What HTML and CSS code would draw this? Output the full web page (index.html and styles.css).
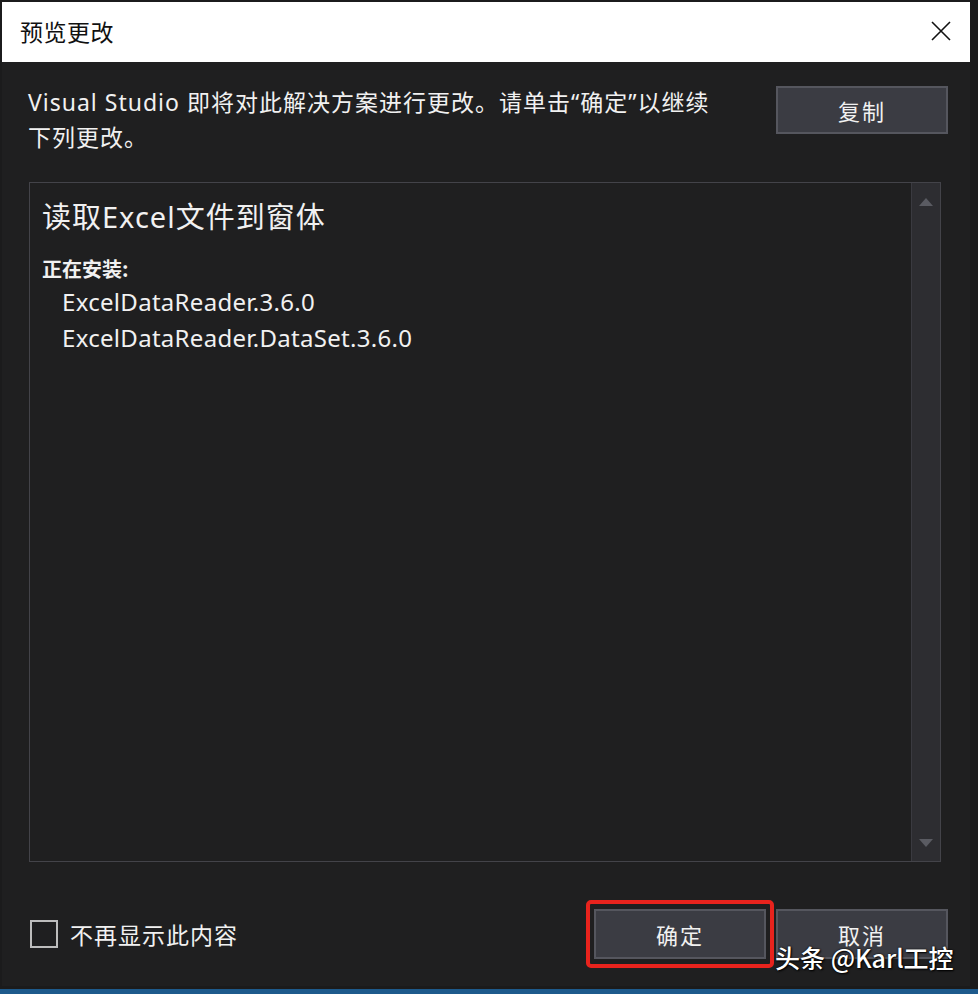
FILE: index.html
```html
<!DOCTYPE html>
<html lang="zh-CN">
<head>
<meta charset="utf-8">
<title>预览更改</title>
<link rel="stylesheet" href="styles.css">
</head>
<body>
<div class="dialog">
  <div class="titlebar">
    <span class="title">预览更改</span>
    <svg class="close" width="22" height="22" viewBox="0 0 22 22"><path d="M2 2 L20 20 M20 2 L2 20" stroke="#111" stroke-width="1.6" fill="none"/></svg>
  </div>
  <div class="content">
    <div class="top-row">
      <p class="intro">Visual Studio 即将对此解决方案进行更改。请单击“确定”以继续<br>下列更改。</p>
      <button class="btn copy">复制</button>
    </div>
    <div class="listbox">
      <div class="list-body">
        <div class="heading">读取Excel文件到窗体</div>
        <div class="label">正在安装:</div>
        <div class="item">ExcelDataReader.3.6.0</div>
        <div class="item">ExcelDataReader.DataSet.3.6.0</div>
      </div>
      <div class="scrollbar">
        <svg class="arrow" width="14" height="8" viewBox="0 0 14 8"><path d="M0 8 L7 0 L14 8 Z" fill="#5a5b62"/></svg>
        <svg class="arrow" width="14" height="8" viewBox="0 0 14 8"><path d="M0 0 L7 8 L14 0 Z" fill="#5a5b62"/></svg>
      </div>
    </div>
    <div class="bottom-row">
      <label class="check"><span class="box"></span><span>不再显示此内容</span></label>
      <div class="buttons">
        <div class="highlight"><button class="btn ok">确定</button></div>
        <button class="btn cancel">取消</button>
      </div>
    </div>
  </div>
</div>
<div class="watermark">头条 @Karl工控</div>
<div class="taskbar"></div>
</body>
</html>
```
FILE: styles.css
```css
html, body {
  margin: 0;
  padding: 0;
}
body {
  width: 978px;
  height: 994px;
  background: #1b1b1c;
  font-family: "Noto Sans", "Noto Sans CJK SC", sans-serif;
  color: #f1f1f1;
  position: relative;
  overflow: hidden;
}
.dialog {
  margin: 2px 0 0 2px;
  width: 968px;
  height: 984px;
  background: #1f1f20;
  display: flex;
  flex-direction: column;
}
.titlebar {
  height: 60px;
  background: #ffffff;
  display: flex;
  align-items: center;
  justify-content: space-between;
  padding: 0 18px 0 18px;
}
.title {
  font-family: "Noto Sans CJK SC", sans-serif;
  color: #111;
  font-size: 23px;
  margin-top: -2px;
  letter-spacing: 0.5px;
}
.close {
  margin-top: -2px;
}
.content {
  padding: 0 22px 0 26px;
  display: flex;
  flex-direction: column;
}
.top-row {
  display: flex;
  justify-content: space-between;
  align-items: flex-start;
  height: 120px;
}
.intro {
  margin: 23px 0 0 0;
  font-size: 23px;
  line-height: 35px;
  color: #f1f1f1;
  font-family: "Noto Sans", "Noto Sans CJK SC", sans-serif;
  letter-spacing: 1px;
}
.btn {
  font-family: "Noto Sans CJK SC", sans-serif;
  font-size: 22px;
  letter-spacing: 2px;
  color: #f1f1f1;
  background: #3b3c43;
  border: 2px solid #55565e;
  width: 172px;
  height: 48px;
  padding: 0;
}
.copy {
  margin-top: 24px;
}
.listbox {
  margin-left: 1px;
  width: 910px;
  height: 678px;
  border: 1px solid #434349;
  display: flex;
  background: #1f1f20;
}
.list-body {
  flex: 1;
  padding: 12px 12px;
}
.heading {
  font-size: 29px;
  letter-spacing: 1px;
  line-height: 44px;
  color: #f1f1f1;
}
.label {
  font-family: "Noto Sans CJK SC", sans-serif;
  font-weight: bold;
  font-size: 20px;
  margin-top: 16px;
  line-height: 28px;
}
.item {
  font-size: 24px;
  letter-spacing: 0.3px;
  line-height: 35px;
  padding-left: 20px;
  margin-top: 1px;
}
.scrollbar {
  width: 28px;
  background: #2d2d31;
  display: flex;
  flex-direction: column;
  justify-content: space-between;
  align-items: center;
  padding: 15px 0 14px;
  border-left: 1px solid #3a3a40;
}
.bottom-row {
  display: flex;
  justify-content: space-between;
  align-items: center;
  margin-top: 38px;
}
.check {
  display: flex;
  align-items: center;
  gap: 12px;
  font-family: "Noto Sans CJK SC", sans-serif;
  font-size: 23px;
  letter-spacing: 1px;
  color: #f1f1f1;
  margin-left: 2px;
}
.box {
  width: 28px;
  height: 28px;
  border: 2px solid #bdbdbd;
  box-sizing: border-box;
}
.buttons {
  display: flex;
  align-items: center;
  gap: 2px;
}
.highlight {
  border: 4px solid #e8231d;
  border-radius: 5px;
  padding: 5px 4px;
}
.ok, .cancel {
  height: 50px;
}
.watermark {
  position: absolute;
  left: 775px;
  top: 939px;
  font-family: "Noto Sans CJK SC", sans-serif;
  font-size: 25px;
  font-weight: 500;
  color: #ffffff;
  text-shadow: 0 0 2px #000, 1px 1px 2px #000;
}
.taskbar {
  position: absolute;
  left: 0;
  bottom: 0;
  width: 978px;
  height: 5px;
  background: #1d5a8c;
}
```
